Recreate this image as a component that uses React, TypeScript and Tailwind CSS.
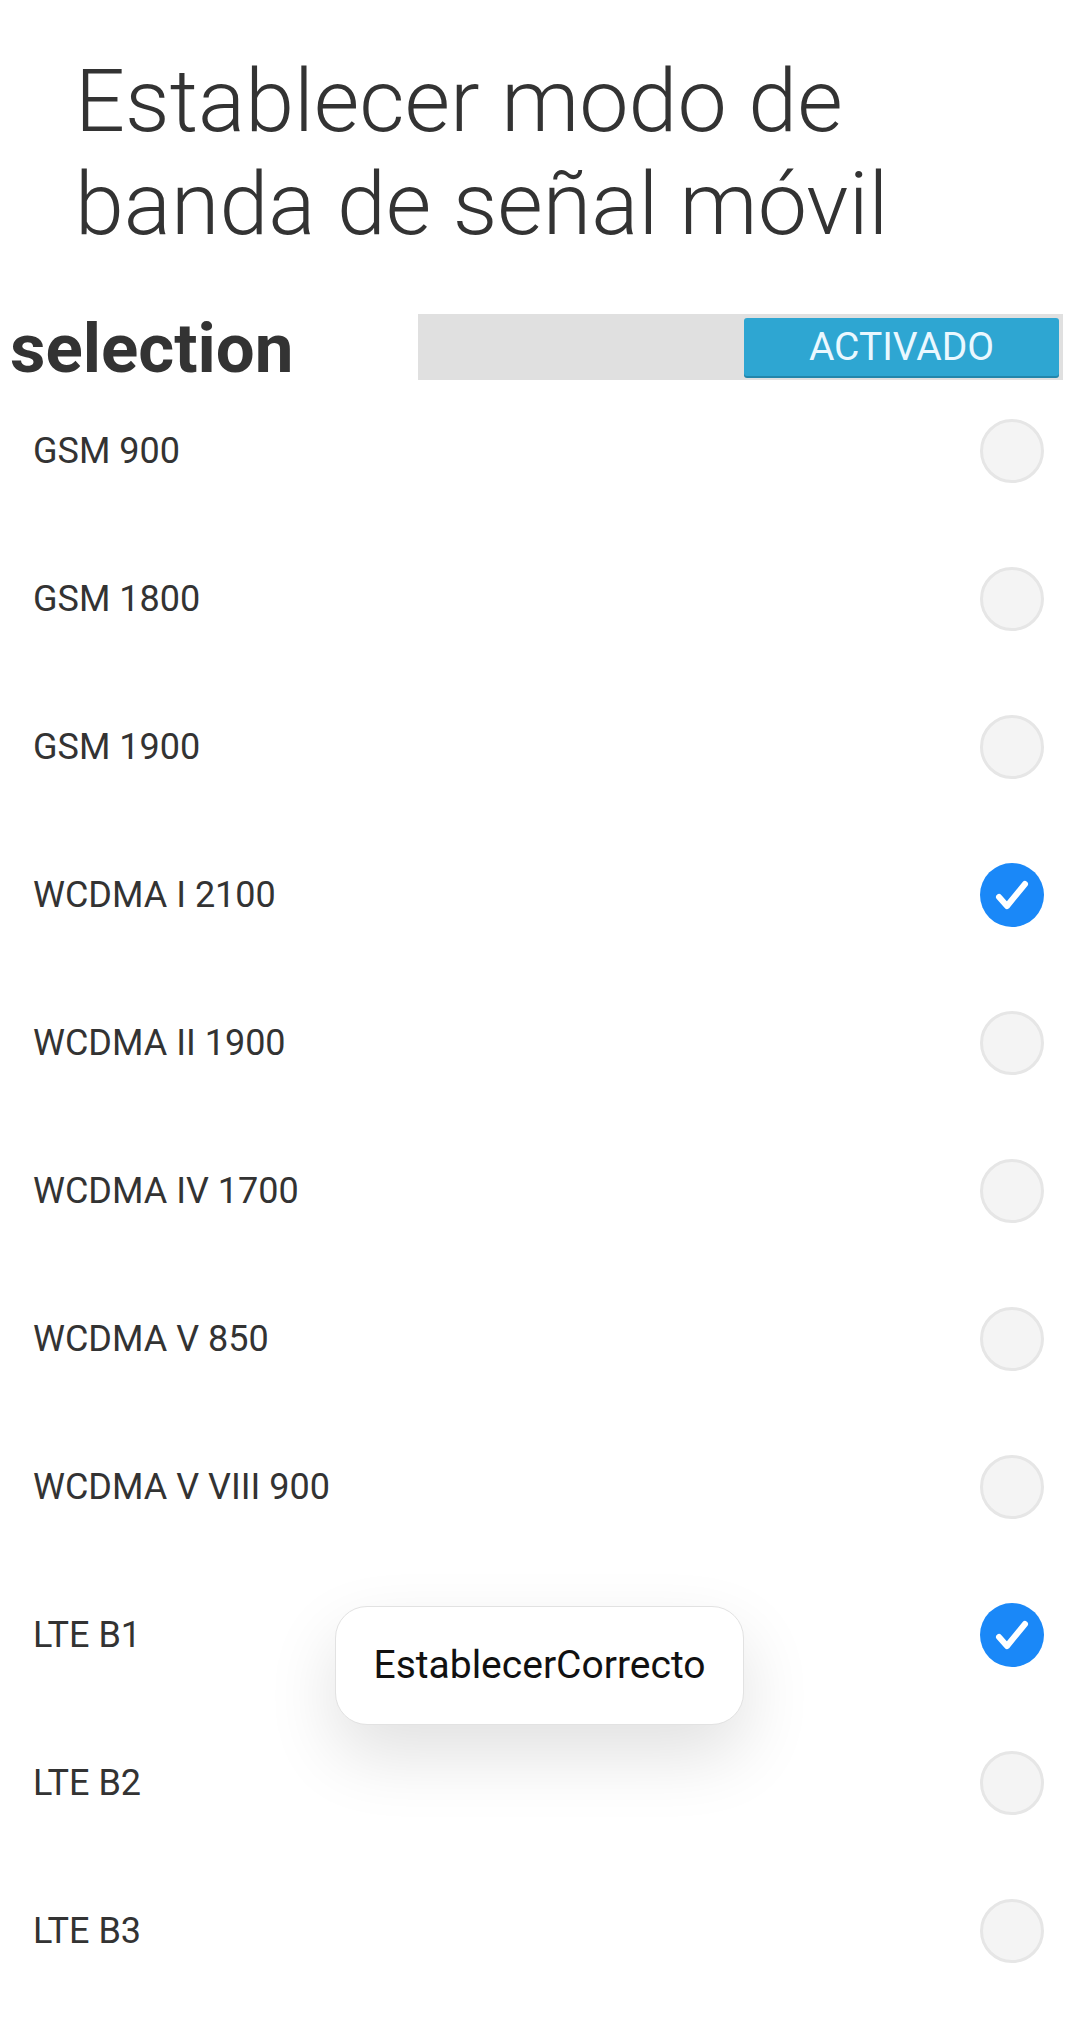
import React from "react";

const bands = [
  { label: "GSM 900", on: false },
  { label: "GSM 1800", on: false },
  { label: "GSM 1900", on: false },
  { label: "WCDMA I 2100", on: true },
  { label: "WCDMA II 1900", on: false },
  { label: "WCDMA IV 1700", on: false },
  { label: "WCDMA V 850", on: false },
  { label: "WCDMA V VIII 900", on: false },
  { label: "LTE B1", on: true },
  { label: "LTE B2", on: false },
  { label: "LTE B3", on: false },
];

function Check({ on }: { on: boolean }) {
  if (!on) {
    return <div className="w-[64px] h-[64px] rounded-full bg-[#f4f4f4] border-[3px] border-[#e6e6e6]" />;
  }
  return (
    <div className="w-[64px] h-[64px] rounded-full bg-[#1a88f8] flex items-center justify-center">
      <svg width="64" height="64" viewBox="0 0 64 64">
        <path d="M19 34 L27 43 L45 21" fill="none" stroke="#fff" strokeWidth="6" strokeLinecap="round" strokeLinejoin="round" />
      </svg>
    </div>
  );
}

export default function App() {
  return (
    <div className="relative w-[1080px] h-[2032px] overflow-hidden bg-white text-[#333] font-['Roboto',sans-serif]">
      {/* Title */}
      <h1 className="pt-[49px] pl-[75px] text-[88px] leading-[103px] font-light text-[#333]">
        Establecer modo de
        <br />
        banda de señal móvil
      </h1>

      {/* Header row */}
      <div className="mt-[59px] flex items-center h-[66px]">
        <span className="pl-[10px] w-[418px] text-[69px] leading-[66px] font-bold text-[#333] pt-[4px]">selection</span>
        <div className="w-[645px] h-[66px] bg-[#e0e0e0] flex items-center justify-end pr-[4px]">
          <div className="w-[315px] h-[58px] rounded-[3px] bg-[#2ea6d2] shadow-[0_2px_0_#2386ab] flex items-center justify-center text-[39px] text-[#eaf8ff]">
            ACTIVADO
          </div>
        </div>
      </div>

      {/* Band list */}
      <div className="mt-[-3px]">
        {bands.map((b) => (
          <div key={b.label} className="h-[148px] flex items-center justify-between pl-[33px] pr-[36px]">
            <span className="text-[36px] text-[#333]">{b.label}</span>
            <Check on={b.on} />
          </div>
        ))}
      </div>

      {/* Toast */}
      <div className="absolute left-[335px] top-[1606px] w-[409px] h-[119px] rounded-[32px] bg-white border border-[#e2e2e2] shadow-[0_30px_70px_rgba(0,0,0,0.12)] flex items-center justify-center text-[39px] text-[#111]">
        EstablecerCorrecto
      </div>
    </div>
  );
}
